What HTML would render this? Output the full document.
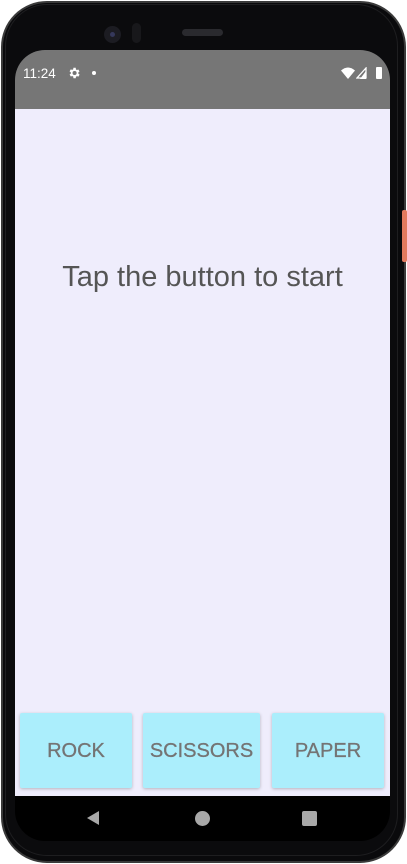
<!DOCTYPE html>
<html><head><meta charset="utf-8"><style>
*{margin:0;padding:0;box-sizing:border-box}
html,body{width:407px;height:864px;background:#fff;overflow:hidden;font-family:"Liberation Sans",Arial,sans-serif}
.phone{position:absolute;left:1px;top:1px;width:405px;height:862px;border-radius:46px;background:#0a0a0c;border:2px solid #3a3a3a}
.inner{position:absolute;left:5px;top:4px;width:393px;height:852px;border-radius:42px;background:#0b0b0d;border:1px solid #1e1e20}
.screen{position:absolute;left:15px;top:50px;width:375px;height:791px;border-radius:30px;overflow:hidden;background:#000}
.status{position:absolute;left:0;top:0;width:375px;height:59px;background:#767676}
.content{position:absolute;left:0;top:59px;width:375px;height:687px;background:#efedfc}
.title{position:absolute;left:0;top:151px;width:375px;text-align:center;font-size:29px;line-height:34px;color:#555}
.btn{position:absolute;top:663px;height:75px;background:#abeefc;border-radius:2px;box-shadow:0 1px 3px rgba(0,0,0,.25);color:#747474;font-size:20px;text-align:center;line-height:77px;-webkit-text-stroke:0.3px #747474}
.time{position:absolute;left:8px;top:16px;color:#fff;font-size:13.5px}
.side{position:absolute;left:402px;top:210px;width:5px;height:52px;background:#e27a5e;border-radius:2px}
</style></head><body>
<div class="phone"></div>
<div class="inner"></div>
<div class="side"></div>
<div style="position:absolute;left:104px;top:26px;width:17px;height:17px;border-radius:50%;background:#1c1c22"></div>
<div style="position:absolute;left:110px;top:32px;width:5px;height:5px;border-radius:50%;background:#35385a"></div>
<div style="position:absolute;left:132px;top:23px;width:9px;height:20px;border-radius:5px;background:#18181b"></div>
<div style="position:absolute;left:182px;top:29px;width:41px;height:7px;border-radius:4px;background:#2a2a2e"></div>
<div class="screen">
<div class="status">
<div class="time">11:24</div>
<svg style="position:absolute;left:52px;top:16px" width="14" height="14" viewBox="0 0 24 24"><path fill="#fff" d="M19.4 13a7.5 7.5 0 0 0 0-2l2.1-1.6-2-3.5-2.5 1a7 7 0 0 0-1.7-1L15 3h-4l-.4 2.7a7 7 0 0 0-1.7 1l-2.5-1-2 3.5L6.6 11a7.5 7.5 0 0 0 0 2l-2.1 1.6 2 3.5 2.5-1a7 7 0 0 0 1.7 1L11 21h4l.4-2.7a7 7 0 0 0 1.7-1l2.5 1 2-3.5zM13 15.5A3.5 3.5 0 1 1 13 8.5a3.5 3.5 0 0 1 0 7z"/></svg>
<div style="position:absolute;left:77px;top:21px;width:4px;height:4px;border-radius:50%;background:#fff"></div>
<svg style="position:absolute;left:326px;top:17px" width="14" height="12" viewBox="0 0 14 12"><path fill="#fff" d="M0 3.5Q7-2.5 14 3.5L7 12z"/></svg>
<svg style="position:absolute;left:341px;top:17px" width="11" height="12" viewBox="0 0 11 12"><path fill="none" stroke="#fff" stroke-width="1.3" d="M10 1V11H1z"/><path fill="#fff" d="M10 4V12H4z"/></svg>
<div style="position:absolute;left:361px;top:17px;width:6px;height:12px;background:#fff;border-radius:1px"></div>
</div>
<div class="content">
<div class="title">Tap the button to start</div>
</div>
<div class="btn" style="left:5px;width:112px">ROCK</div>
<div class="btn" style="left:128px;width:117px">SCISSORS</div>
<div class="btn" style="left:257px;width:112px">PAPER</div>
<svg style="position:absolute;left:71px;top:760px" width="14" height="16" viewBox="0 0 14 16"><path fill="#a8a8a8" d="M13 1V15L1 8z"/></svg>
<div style="position:absolute;left:180px;top:761px;width:15px;height:15px;border-radius:50%;background:#a8a8a8"></div>
<div style="position:absolute;left:287px;top:761px;width:15px;height:15px;border-radius:2px;background:#a8a8a8"></div>
</div>
</body></html>
